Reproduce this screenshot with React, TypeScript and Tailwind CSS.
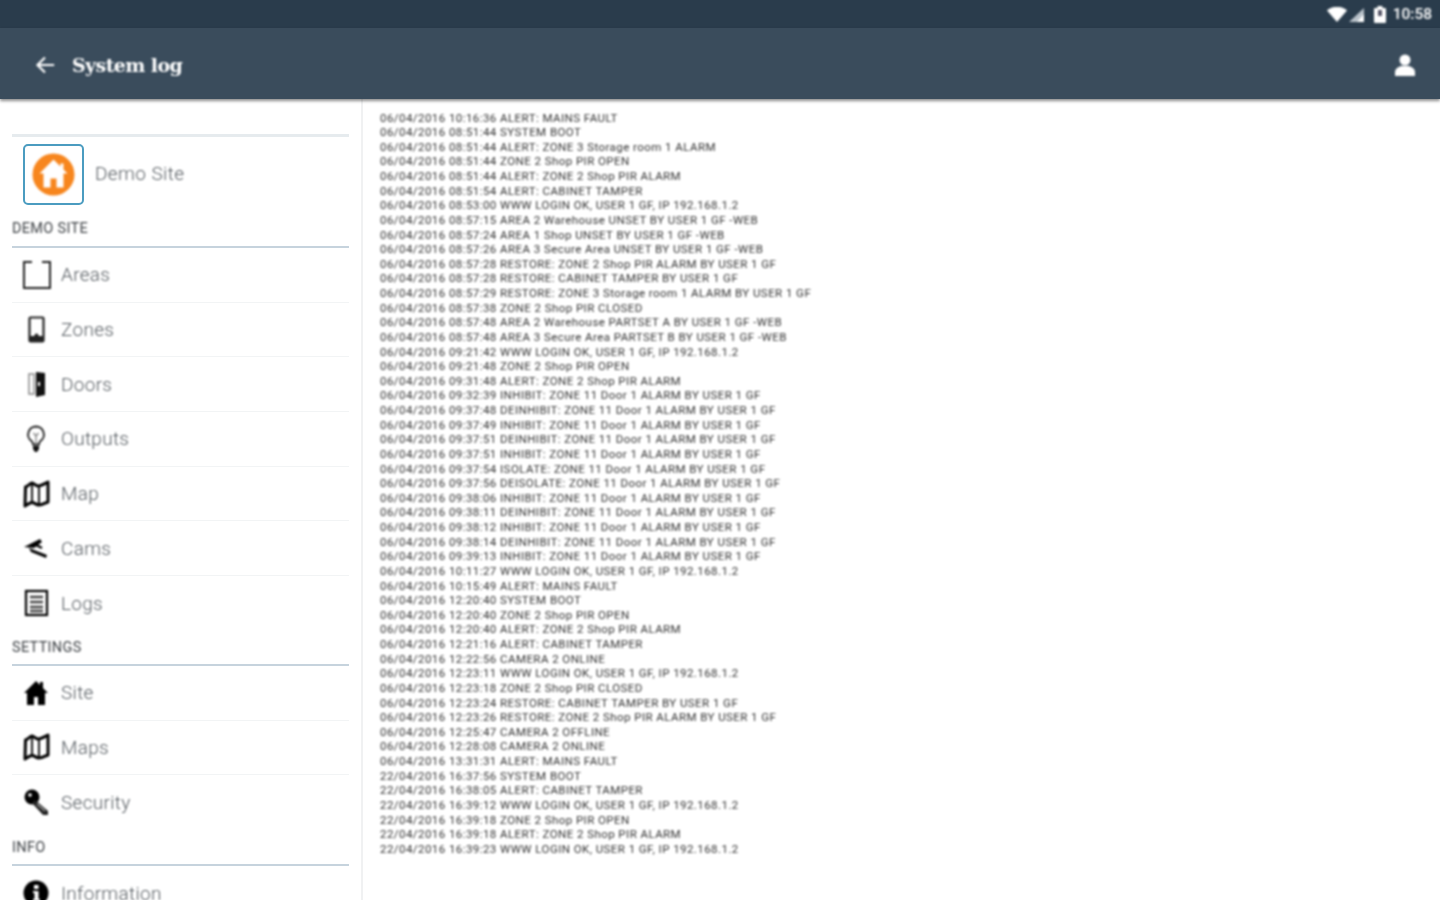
import React from "react";

const d1 = "06/04/2016 ";
const d2 = "22/04/2016 ";
const login = " WWW LOGIN OK, USER 1 GF, IP 192.168.1.2";
const logs: string[] = [
  d1 + "10:16:36 ALERT: MAINS FAULT",
  d1 + "08:51:44 SYSTEM BOOT",
  d1 + "08:51:44 ALERT: ZONE 3 Storage room 1 ALARM",
  d1 + "08:51:44 ZONE 2 Shop PIR OPEN",
  d1 + "08:51:44 ALERT: ZONE 2 Shop PIR ALARM",
  d1 + "08:51:54 ALERT: CABINET TAMPER",
  d1 + "08:53:00" + login,
  d1 + "08:57:15 AREA 2 Warehouse UNSET BY USER 1 GF -WEB",
  d1 + "08:57:24 AREA 1 Shop UNSET BY USER 1 GF -WEB",
  d1 + "08:57:26 AREA 3 Secure Area UNSET BY USER 1 GF -WEB",
  d1 + "08:57:28 RESTORE: ZONE 2 Shop PIR ALARM BY USER 1 GF",
  d1 + "08:57:28 RESTORE: CABINET TAMPER BY USER 1 GF",
  d1 + "08:57:29 RESTORE: ZONE 3 Storage room 1 ALARM BY USER 1 GF",
  d1 + "08:57:38 ZONE 2 Shop PIR CLOSED",
  d1 + "08:57:48 AREA 2 Warehouse PARTSET A BY USER 1 GF -WEB",
  d1 + "08:57:48 AREA 3 Secure Area PARTSET B BY USER 1 GF -WEB",
  d1 + "09:21:42" + login,
  d1 + "09:21:48 ZONE 2 Shop PIR OPEN",
  d1 + "09:31:48 ALERT: ZONE 2 Shop PIR ALARM",
  d1 + "09:32:39 INHIBIT: ZONE 11 Door 1 ALARM BY USER 1 GF",
  d1 + "09:37:48 DEINHIBIT: ZONE 11 Door 1 ALARM BY USER 1 GF",
  d1 + "09:37:49 INHIBIT: ZONE 11 Door 1 ALARM BY USER 1 GF",
  d1 + "09:37:51 DEINHIBIT: ZONE 11 Door 1 ALARM BY USER 1 GF",
  d1 + "09:37:51 INHIBIT: ZONE 11 Door 1 ALARM BY USER 1 GF",
  d1 + "09:37:54 ISOLATE: ZONE 11 Door 1 ALARM BY USER 1 GF",
  d1 + "09:37:56 DEISOLATE: ZONE 11 Door 1 ALARM BY USER 1 GF",
  d1 + "09:38:06 INHIBIT: ZONE 11 Door 1 ALARM BY USER 1 GF",
  d1 + "09:38:11 DEINHIBIT: ZONE 11 Door 1 ALARM BY USER 1 GF",
  d1 + "09:38:12 INHIBIT: ZONE 11 Door 1 ALARM BY USER 1 GF",
  d1 + "09:38:14 DEINHIBIT: ZONE 11 Door 1 ALARM BY USER 1 GF",
  d1 + "09:39:13 INHIBIT: ZONE 11 Door 1 ALARM BY USER 1 GF",
  d1 + "10:11:27" + login,
  d1 + "10:15:49 ALERT: MAINS FAULT",
  d1 + "12:20:40 SYSTEM BOOT",
  d1 + "12:20:40 ZONE 2 Shop PIR OPEN",
  d1 + "12:20:40 ALERT: ZONE 2 Shop PIR ALARM",
  d1 + "12:21:16 ALERT: CABINET TAMPER",
  d1 + "12:22:56 CAMERA 2 ONLINE",
  d1 + "12:23:11" + login,
  d1 + "12:23:18 ZONE 2 Shop PIR CLOSED",
  d1 + "12:23:24 RESTORE: CABINET TAMPER BY USER 1 GF",
  d1 + "12:23:26 RESTORE: ZONE 2 Shop PIR ALARM BY USER 1 GF",
  d1 + "12:25:47 CAMERA 2 OFFLINE",
  d1 + "12:28:08 CAMERA 2 ONLINE",
  d1 + "13:31:31 ALERT: MAINS FAULT",
  d2 + "16:37:56 SYSTEM BOOT",
  d2 + "16:38:05 ALERT: CABINET TAMPER",
  d2 + "16:39:12" + login,
  d2 + "16:39:18 ZONE 2 Shop PIR OPEN",
  d2 + "16:39:18 ALERT: ZONE 2 Shop PIR ALARM",
  d2 + "16:39:23" + login,
];

const Svg = ({ children }: { children: React.ReactNode }) => (
  <svg width={30} height={30} viewBox="0 0 30 30" fill="none">{children}</svg>
);

const AreasIcon = () => (
  <Svg><path d="M11 2H3V28H29V2H21" stroke="#222" strokeWidth="2" /></Svg>
);
const ZonesIcon = () => (
  <Svg>
    <rect x="8.5" y="2.500" width="14" height="24" rx="1" stroke="#222" strokeWidth="2.200" />
    <path d="M9 21h13v5H9z" fill="#222" />
    <circle cx="15.500" cy="20.500" r="2" fill="#222" />
  </Svg>
);
const DoorsIcon = () => (
  <Svg>
    <path d="M8 5h5v20H8z" stroke="#888" strokeWidth="1.500" />
    <path d="M15 3l9 1v22l-9 2z" fill="#111" />
    <rect x="17" y="13" width="2" height="4" fill="#fff" />
  </Svg>
);
const BulbIcon = () => (
  <Svg>
    <path d="M15 2.500a8 8 0 0 0-4.500 14.500c1 1 1.500 2 1.500 3.500h6c0-1.500.5-2.500 1.500-3.500A8 8 0 0 0 15 2.500z" stroke="#222" strokeWidth="1.800" />
    <path d="M12.500 9l2.500 3 2.500-3M15 12v8" stroke="#777" strokeWidth="1.200" />
    <path d="M12 22h6v3l-2 3h-2l-2-3z" fill="#111" />
  </Svg>
);
const MapIcon = () => (
  <Svg>
    <path d="M4.500 8c3-1 4-3.500 6.500-4 3 1 4 3 6.500 3S23 5 27 3v20c-3 1-5.500 3-9 3-3 0-4.500-2.500-7-2.500S7 25.500 4 27z" stroke="#000" strokeWidth="3" strokeLinejoin="round" />
    <path d="M11 4v19M18 7v19" stroke="#000" strokeWidth="1.800" />
  </Svg>
);
const CamsIcon = () => (
  <Svg>
    <path d="M3 14l16-8 2 3-8 6z" fill="#000" />
    <path d="M8 15l18 7-1 3-15-6z" fill="#000" />
    <path d="M15 12l6 3" stroke="#000" strokeWidth="2.500" />
  </Svg>
);
const LogsIcon = () => (
  <Svg>
    <rect x="5" y="3" width="21" height="24" stroke="#000" strokeWidth="2.200" />
    <path d="M9 9h13M9 14h13M9 19h13M9 23h13" stroke="#444" strokeWidth="2.400" />
  </Svg>
);
const HouseIcon = () => (
  <Svg>
    <path d="M15 3L3 15h3v12h7v-8h4v8h7V15h3l-5-5V4h-3v3z" fill="#000" />
  </Svg>
);
const KeyIcon = () => (
  <Svg>
    <circle cx="11" cy="9" r="7.500" fill="#000" />
    <circle cx="9" cy="7" r="1.800" fill="#fff" />
    <path d="M14 12l13 11v4h-5L11 15z" fill="#222" />
    <path d="M16 16l8 7" stroke="#aaa" strokeWidth="1.200" />
  </Svg>
);
const InfoIcon = () => (
  <Svg>
    <circle cx="15" cy="15" r="12.500" fill="#000" />
    <rect x="13" y="7" width="4.500" height="4" fill="#fff" />
    <path d="M12 13h5.500v8H19v2h-7v-2h1.500v-6H12z" fill="#fff" />
  </Svg>
);

const Row = ({ icon, label, last }: { icon: React.ReactNode; label: string; last?: boolean }) => (
  <div className={`flex h-[54.7px] items-center pl-[9px] ${last ? "" : "border-b border-[#f2f4f5]"}`}>
    <span className="flex w-[30px] justify-center blur-[0.8px]">{icon}</span>
    <span className="ml-[10px] mt-[1.5px] text-[19px] tracking-[0.3px] text-[#555b60] blur-[0.8px] [font-family:'Roboto',sans-serif] font-light">{label}</span>
  </div>
);

const Section = ({ label, className }: { label: string; className: string }) => (
  <div className={`${className} border-b-2 border-[#c6d3dd]`}>
    <span className="block text-[14.5px] leading-[18px] tracking-[0.3px] text-[#3d4145] blur-[0.8px] [font-family:'Roboto',sans-serif]">{label}</span>
  </div>
);

export default function App() {
  return (
    <div className="flex h-[900px] w-[1440px] flex-col overflow-hidden bg-white">
      <div className="flex h-[28px] shrink-0 items-center justify-end bg-[#2a3c4c] pr-[8px] text-white">
        <div className="flex items-center blur-[0.8px]">
          <svg width="20" height="15" viewBox="0 0 20 15" className="mr-[1px]"><path d="M0 3.500C5-1.500 15-1.500 20 3.500L10 15z" fill="#fff" /></svg>
          <svg width="16" height="15" viewBox="0 0 16 15" className="mr-[10px]"><path d="M16 1v14H1z" fill="#b9c2ca" /><path d="M16 7v8H9z" fill="#fff" /></svg>
          <svg width="12" height="17" viewBox="0 0 12 17" className="mr-[7px]"><path d="M3.500 0h5v2H11a1 1 0 0 1 1 1v13a1 1 0 0 1-1 1H1a1 1 0 0 1-1-1V3a1 1 0 0 1 1-1h2.500z" fill="#fff" /><rect x="4" y="4" width="4" height="6" fill="#556" /></svg>
          <span className="mt-[2px] text-[15.5px] font-medium [font-family:'Roboto',sans-serif]">10:58</span>
        </div>
      </div>
      <div className="z-10 flex h-[71px] shrink-0 items-center bg-[#3a4c5c] pl-[35px] pr-[23px] pt-[2px] shadow-[0_2px_3px_rgba(0,0,0,0.45)]">
        <svg width="20" height="20" viewBox="0 0 24 24" fill="none" stroke="#fff" strokeWidth="2.600" className="blur-[0.8px]"><path d="M23 12H3M12 3l-9 9 9 9" /></svg>
        <span className="ml-[17px] mt-[1px] text-[19px] font-bold text-[#ffffff] blur-[0.8px] [font-family:'DejaVu_Serif',serif] tracking-[-0.6px]">System log</span>
        <svg width="24" height="24" viewBox="0 0 24 24" className="ml-auto blur-[0.8px]"><circle cx="12" cy="7" r="5.500" fill="#fff" /><path d="M2 23v-4c0-3 3-5 6-6h8c3 1 6 3 6 6v4z" fill="#fff" /></svg>
      </div>
      <div className="flex min-h-0 flex-1">
        <aside className="w-[363px] shrink-0 border-r-2 border-[#f0f1f2] pl-[12px] pr-[12px] pt-[35px]">
          <div className="border-t-[3px] border-[#e6ebee]">
            <div className="flex items-center pl-[11px] pt-[7px]">
              <div className="flex h-[61px] w-[61px] items-center justify-center rounded-[5px] border-2 border-[#4b9cc0]">
                <svg width="44" height="44" viewBox="0 0 44 44" className="-translate-x-[0.5px] -translate-y-[0.5px] blur-[0.8px]">
                  <circle cx="22" cy="22" r="21" fill="#f7861e" />
                  <path d="M22 7L8 21h4v14h7v-9h6v9h7V21h4l-4-4v-6h-3v3z" fill="#fff" />
                </svg>
              </div>
              <span className="ml-[11px] -mt-[1px] text-[19px] tracking-[0.4px] text-[#555b60] blur-[0.8px] [font-family:'Roboto',sans-serif] font-light">Demo Site</span>
            </div>
            <Section label="DEMO SITE" className="mt-[15px] pb-[8px]" />
            <Row icon={<AreasIcon />} label="Areas" />
            <Row icon={<ZonesIcon />} label="Zones" />
            <Row icon={<DoorsIcon />} label="Doors" />
            <Row icon={<BulbIcon />} label="Outputs" />
            <Row icon={<MapIcon />} label="Map" />
            <Row icon={<CamsIcon />} label="Cams" />
            <Row icon={<LogsIcon />} label="Logs" last />
            <Section label="SETTINGS" className="mt-[8px] pb-[7px]" />
            <Row icon={<HouseIcon />} label="Site" />
            <Row icon={<MapIcon />} label="Maps" />
            <Row icon={<KeyIcon />} label="Security" last />
            <Section label="INFO" className="mt-[9px] pb-[7px]" />
            <Row icon={<InfoIcon />} label="Information" last />
          </div>
        </aside>
        <main className="pl-[17px] pt-[11.5px] text-[11.5px] leading-[14.62px] tracking-[0.44px] text-[#333] blur-[0.8px] [font-family:'Roboto',sans-serif]">
          {logs.map((l, i) => (
            <div key={i} className="whitespace-pre">{l}</div>
          ))}
        </main>
      </div>
    </div>
  );
}
